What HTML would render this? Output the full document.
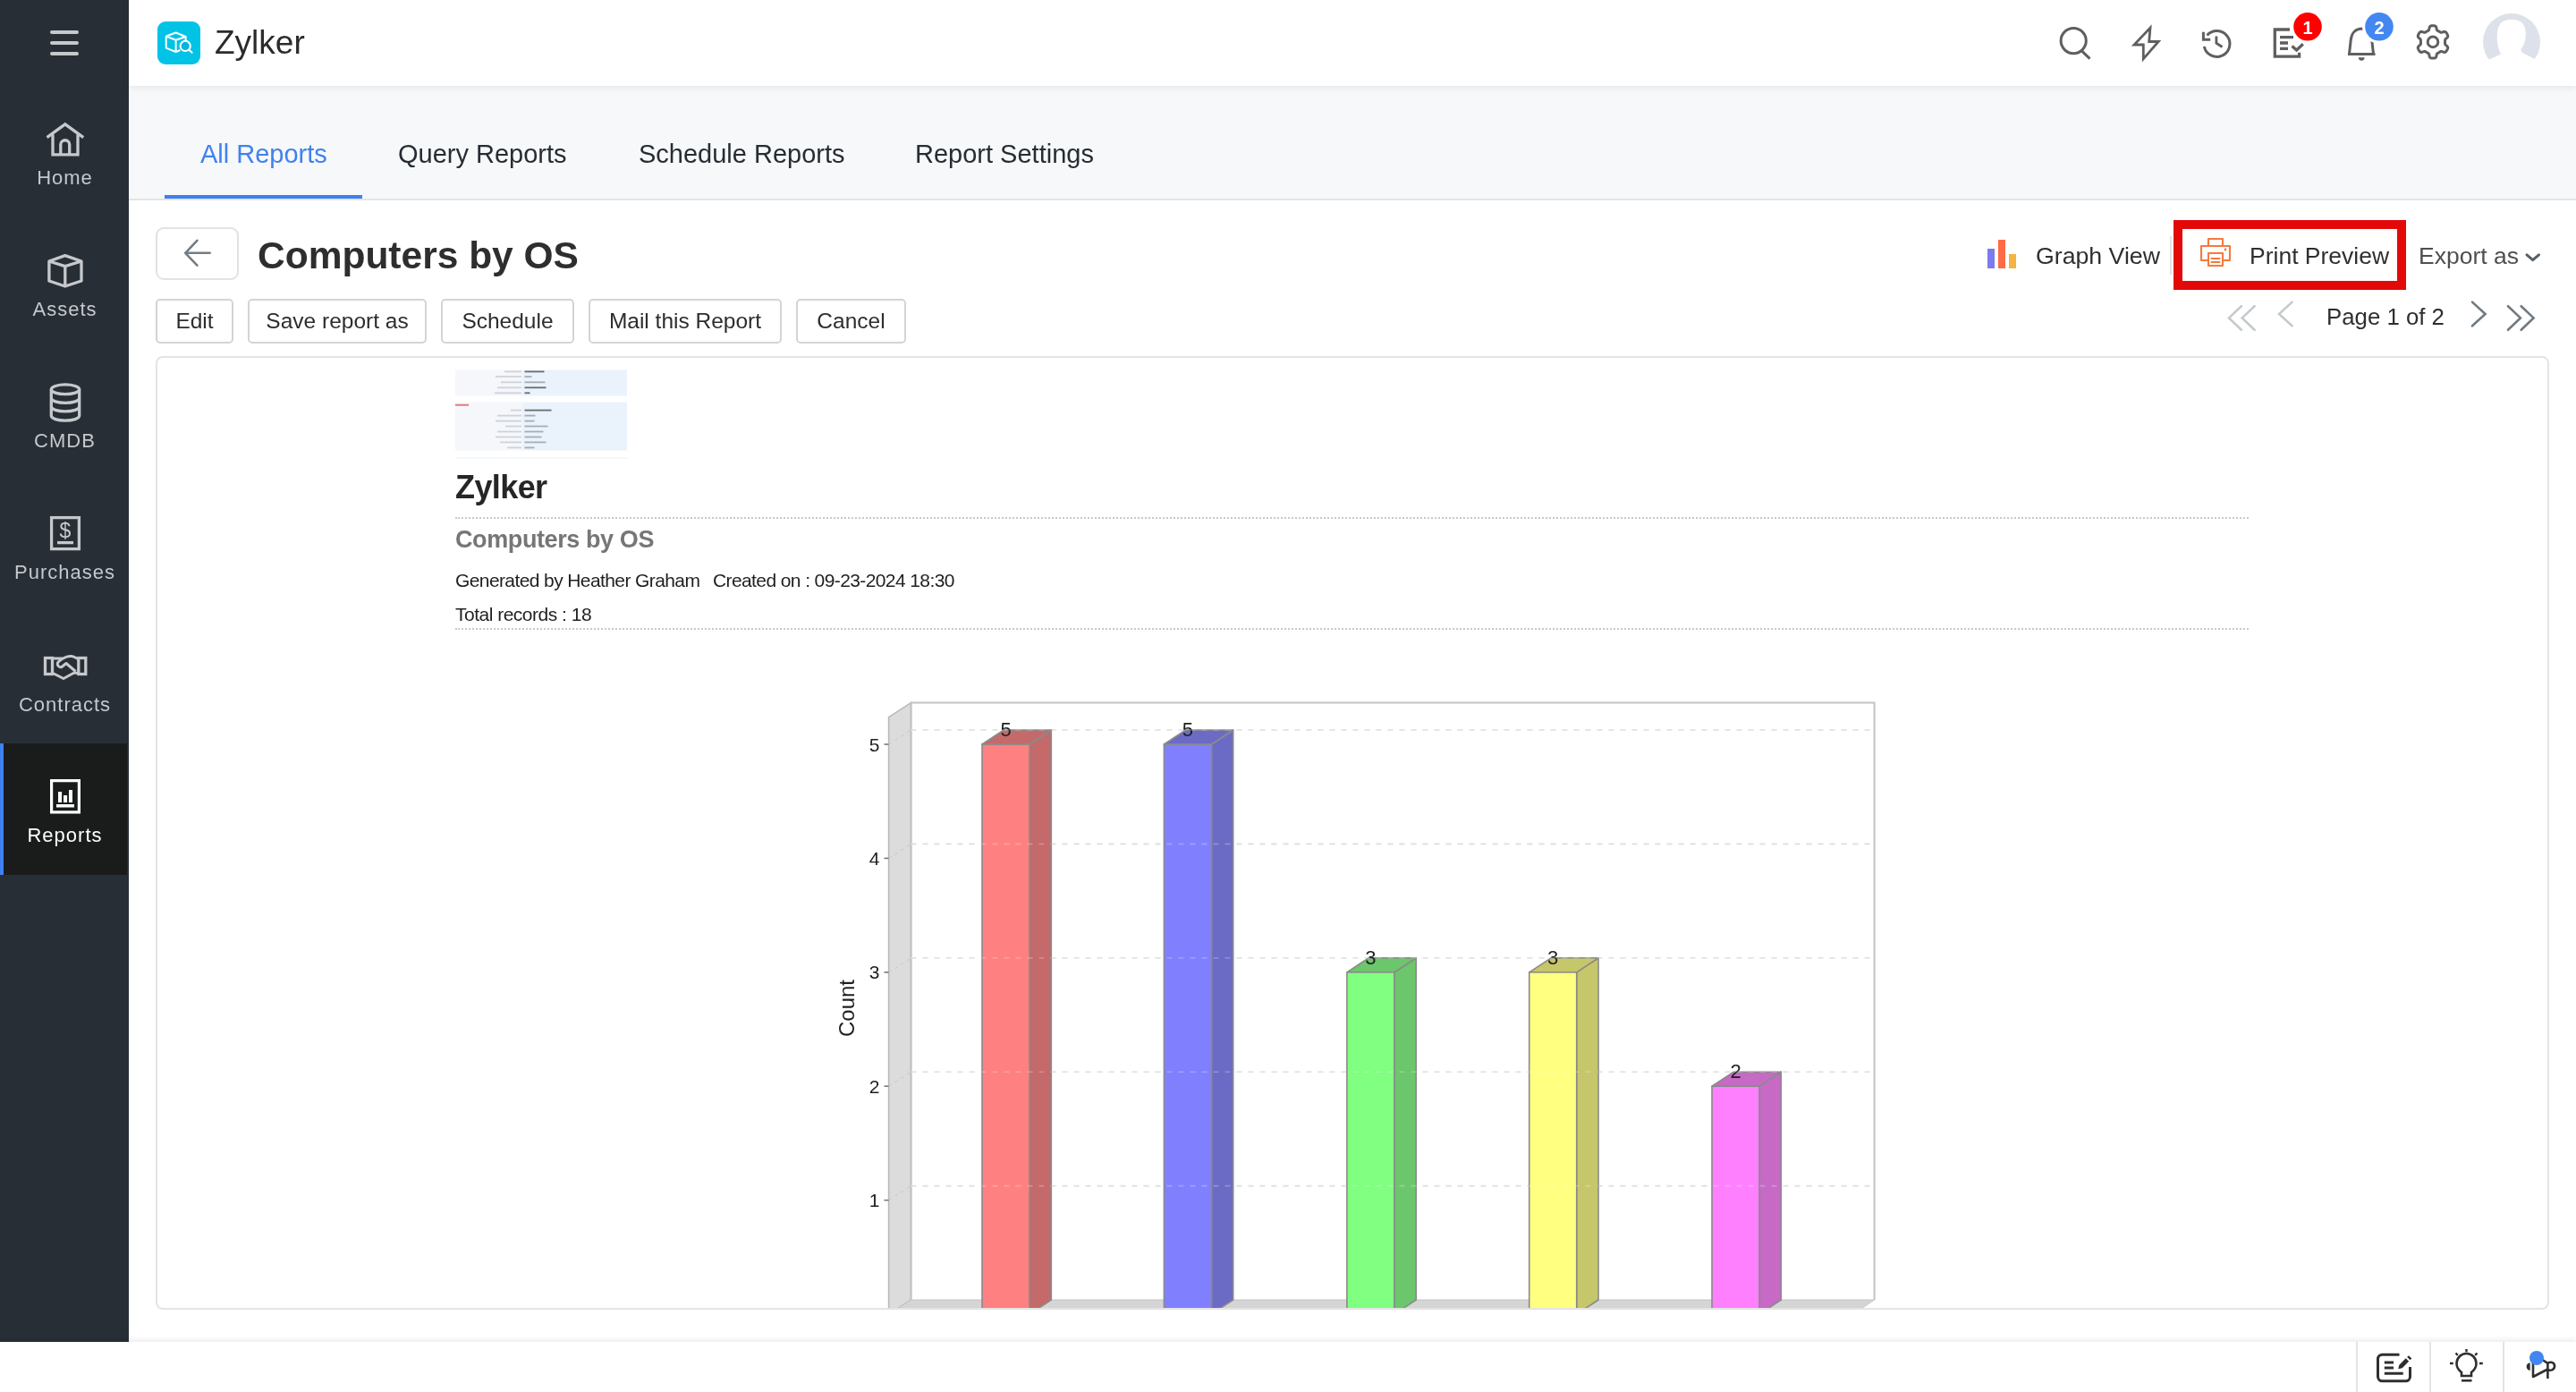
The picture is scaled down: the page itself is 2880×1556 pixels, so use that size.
<!DOCTYPE html>
<html><head><meta charset="utf-8">
<style>
*{margin:0;padding:0;box-sizing:border-box}
html,body{width:2880px;height:1556px;overflow:hidden;background:#fff;font-family:"Liberation Sans",sans-serif;color:#333}
#wrap{position:absolute;left:0;top:0;width:2880px;height:1556px;will-change:transform}
.a{position:absolute;white-space:nowrap}
#side{position:absolute;left:0;top:0;width:144px;height:1500px;background:#272e36}
.ham{position:absolute;left:56px;width:32px;height:4px;border-radius:2px;background:#c7c8ca}
.nlab{position:absolute;left:0;width:144px;text-align:center;font-size:22px;line-height:22px;color:#c5c8cc;letter-spacing:1px;text-indent:1px}
#hdr{position:absolute;left:144px;top:0;width:2736px;height:96px;background:#fff;box-shadow:0 2px 8px rgba(0,0,0,0.08);z-index:2}
#tabs{position:absolute;left:144px;top:96px;width:2736px;height:128px;background:#f7f8fa;border-bottom:2px solid #e3e4e6}
.tab{position:absolute;font-size:29px;line-height:29px;color:#262d33}
.btn{position:absolute;top:334px;height:50px;border:2px solid #d4d4d4;border-radius:5px;background:#fff;font-size:24.5px;line-height:46px;text-align:center;color:#2d2d2d}
#box{position:absolute;left:174px;top:398px;width:2676px;height:1066px;border:2px solid #e4e4e4;border-radius:8px;background:#fff}
#foot{position:absolute;left:0;top:1500px;width:2880px;height:56px;background:#fff;box-shadow:0 -3px 6px rgba(0,0,0,0.07);z-index:3}
#ov{position:absolute;left:0;top:0;z-index:5}
.rp{position:absolute;white-space:nowrap;color:#1f1f1f}
.dot{position:absolute;left:509px;width:2005px;height:0;border-top:2px dotted #c9c9c9}
</style></head><body><div id="wrap">
<div id="side">
  <div class="ham" style="top:34px"></div>
  <div class="ham" style="top:46px"></div>
  <div class="ham" style="top:58px"></div>
  <div style="position:absolute;left:0;top:831px;width:142px;height:147px;background:#1a1c1c;border-left:4px solid #3e82f0"></div>
  <div class="nlab" style="top:188px">Home</div>
  <div class="nlab" style="top:335px">Assets</div>
  <div class="nlab" style="top:482px">CMDB</div>
  <div class="nlab" style="top:629px">Purchases</div>
  <div class="nlab" style="top:777px">Contracts</div>
  <div class="nlab" style="top:923px;color:#fff">Reports</div>
</div>
<div id="hdr">
  <div class="a" style="left:96px;top:29px;font-size:37px;line-height:37px;color:#2b2b2b">Zylker</div>
</div>
<div id="tabs">
  <div class="tab" style="left:80px;top:62px;color:#3f82ee">All Reports</div>
  <div style="position:absolute;left:40px;top:122px;width:221px;height:4px;background:#3f82ee"></div>
  <div class="tab" style="left:301px;top:62px">Query Reports</div>
  <div class="tab" style="left:570px;top:62px">Schedule Reports</div>
  <div class="tab" style="left:879px;top:62px">Report Settings</div>
</div>
<div class="a" style="left:174px;top:254px;width:93px;height:59px;border:2px solid #e2e2e2;border-radius:9px"></div>
<div class="a" style="left:288px;top:265px;font-size:42.5px;line-height:42px;font-weight:bold;color:#2e2e2e">Computers by OS</div>
<div class="a" style="left:2276px;top:273px;font-size:26.7px;line-height:27px;color:#2f2f2f">Graph View</div>
<div class="a" style="left:2426px;top:264px;width:2px;height:43px;background:#e3e3e3"></div>
<div class="a" style="left:2430px;top:246px;width:260px;height:78px;border:10px solid #e30909"></div>
<div class="a" style="left:2515px;top:273px;font-size:26.5px;line-height:27px;color:#2f2f2f">Print Preview</div>
<div class="a" style="left:2704px;top:273px;font-size:26.5px;line-height:27px;color:#4f4f4f">Export as</div>
<div class="a" style="left:2601px;top:341px;font-size:25.8px;line-height:26px;color:#2f2f2f">Page 1 of 2</div>
<div class="btn" style="left:174px;width:87px">Edit</div>
<div class="btn" style="left:277px;width:200px">Save report as</div>
<div class="btn" style="left:493px;width:149px">Schedule</div>
<div class="btn" style="left:658px;width:216px">Mail this Report</div>
<div class="btn" style="left:890px;width:123px">Cancel</div>
<div id="box"></div>
<!--REPORT-->
<svg class="a" style="left:509px;top:412px;filter:blur(0.45px)" width="194" height="102" viewBox="509 412 194 102"><rect x="509" y="413.5" width="75" height="29" fill="#f5f7fb"/><rect x="584" y="413.5" width="117" height="29" fill="#eaf3fb"/><rect x="509" y="449.5" width="75" height="54" fill="#f5f7fb"/><rect x="584" y="449.5" width="117" height="54" fill="#eaf3fb"/><rect x="509" y="511.5" width="192" height="1" fill="#eef4fa"/><rect x="509" y="451.8" width="15" height="1.8" fill="#d9534f" opacity="0.8"/><rect x="564" y="414.5" width="19" height="1.8" fill="#80868d" opacity="0.32"/><rect x="586.5" y="414.5" width="22" height="1.8" fill="#333" opacity="0.7"/><rect x="554" y="420.1" width="29" height="1.8" fill="#80868d" opacity="0.32"/><rect x="586.5" y="420.1" width="8" height="1.8" fill="#8a8f96" opacity="0.7"/><rect x="560" y="426.40000000000003" width="23" height="1.8" fill="#80868d" opacity="0.32"/><rect x="586.5" y="426.40000000000003" width="23" height="1.8" fill="#8a8f96" opacity="0.7"/><rect x="556" y="432.40000000000003" width="27" height="1.8" fill="#80868d" opacity="0.32"/><rect x="586.5" y="432.40000000000003" width="24" height="1.8" fill="#333" opacity="0.7"/><rect x="553" y="438.40000000000003" width="30" height="1.8" fill="#80868d" opacity="0.32"/><rect x="586.5" y="438.40000000000003" width="6" height="1.8" fill="#333" opacity="0.7"/><rect x="571" y="457.70000000000005" width="12" height="1.8" fill="#80868d" opacity="0.32"/><rect x="586.5" y="457.70000000000005" width="30" height="1.8" fill="#333" opacity="0.7"/><rect x="556" y="463.70000000000005" width="27" height="1.8" fill="#80868d" opacity="0.32"/><rect x="586.5" y="463.70000000000005" width="12" height="1.8" fill="#8a8f96" opacity="0.7"/><rect x="554" y="469.70000000000005" width="29" height="1.8" fill="#80868d" opacity="0.32"/><rect x="586.5" y="469.70000000000005" width="11" height="1.8" fill="#8a8f96" opacity="0.7"/><rect x="565" y="475.6" width="18" height="1.8" fill="#80868d" opacity="0.32"/><rect x="586.5" y="475.6" width="26" height="1.8" fill="#8a8f96" opacity="0.7"/><rect x="556" y="481.6" width="27" height="1.8" fill="#80868d" opacity="0.32"/><rect x="586.5" y="481.6" width="21" height="1.8" fill="#8a8f96" opacity="0.7"/><rect x="554" y="487.6" width="29" height="1.8" fill="#80868d" opacity="0.32"/><rect x="586.5" y="487.6" width="19" height="1.8" fill="#8a8f96" opacity="0.7"/><rect x="559" y="493.5" width="24" height="1.8" fill="#80868d" opacity="0.32"/><rect x="586.5" y="493.5" width="24" height="1.8" fill="#8a8f96" opacity="0.7"/><rect x="567" y="499.5" width="16" height="1.8" fill="#80868d" opacity="0.32"/><rect x="586.5" y="499.5" width="11" height="1.8" fill="#8a8f96" opacity="0.7"/></svg>
<div class="rp" style="left:509px;top:527px;font-size:36px;line-height:36px;font-weight:bold;color:#262626;letter-spacing:-0.6px">Zylker</div>
<div class="dot" style="top:578px"></div>
<div class="rp" style="left:509px;top:590px;font-size:27px;line-height:27px;font-weight:bold;color:#767676;letter-spacing:-0.4px">Computers by OS</div>
<div class="rp" style="left:509px;top:638px;font-size:21px;line-height:21px;letter-spacing:-0.6px">Generated by Heather Graham</div>
<div class="rp" style="left:797px;top:638px;font-size:21px;line-height:21px;letter-spacing:-0.6px">Created on : 09-23-2024 18:30</div>
<div class="rp" style="left:509px;top:676px;font-size:21px;line-height:21px;letter-spacing:-0.5px">Total records : 18</div>
<div class="dot" style="top:702px"></div>
<div id="foot"></div>
<!--OVERLAY--><svg id="ov" width="2880" height="1556" viewBox="0 0 2880 1556">
<g fill="none" stroke="#c6c8cb" stroke-width="3.3">
 <path d="M52.5,153.7 L72.8,138.8 L93.2,153.7 M59,150.4 V172.8 H87 V150.4 M67.8,172.8 V161.7 A4.95,4.95 0 0 1 77.7,161.7 V172.8"/>
 <path d="M72.8,285.6 L91,292 V314 L72.8,320 L54.9,314 V292 Z M54.9,292 L72.8,297.6 L91,292 M72.8,297.6 V320" stroke-linejoin="round"/>
 <ellipse cx="73" cy="435.3" rx="15.7" ry="5.4"/>
 <path d="M57.3,435.3 V464.8 M88.7,435.3 V464.8 M57.3,445 A15.7,5.4 0 0 0 88.7,445 M57.3,454.5 A15.7,5.4 0 0 0 88.7,454.5 M57.3,464.8 A15.7,5.4 0 0 0 88.7,464.8"/>
 <rect x="57.6" y="578.6" width="30.8" height="35"/>
 <path d="M64,606.6 H82"/>
 <rect x="50.5" y="735.5" width="8" height="18"/>
 <rect x="87.8" y="735.5" width="8" height="18"/>
 <path d="M59,736 H70.5 C74,733.8 77,733.2 80,733.5 C82.5,733.8 84.5,735 87,736.5 M70.5,736 C68,737.5 65.5,739 64.5,741 C63.5,744 66.5,746.5 69,745.5 L74,741.5 L84.5,750.5 M59,752.5 L71,758.5 L83,752 L87.5,752.5" stroke-width="3" stroke-linejoin="round"/>
</g>
<text x="73" y="601" font-size="23" font-family="Liberation Sans" fill="#c6c8cb" text-anchor="middle">$</text>
<g fill="#fff">
 <path d="M56,871 H90 V909.4 H56 Z M59.2,874.2 V906.2 H86.8 V874.2 Z" fill-rule="evenodd"/>
 <rect x="65" y="885" width="4.1" height="12"/>
 <rect x="71" y="889" width="4.1" height="8"/>
 <rect x="77" y="883" width="4" height="14"/>
 <rect x="63" y="899" width="20" height="3.5"/>
</g>
<!-- logo -->
<rect x="176" y="24" width="48" height="48" rx="9" fill="#00c3e5"/>
<g fill="none" stroke="#fff" stroke-width="2" stroke-linejoin="round">
 <path d="M185.7,40.5 L196.6,36.5 L207.6,41 V46.5 M185.7,40.5 L196.6,44.7 L207.6,41 M185.7,40.5 V53.6 L196.6,58 L201.5,56 M196.6,44.7 V58"/>
 <circle cx="207.2" cy="51.4" r="5.6" fill="#0cb2de"/>
 <path d="M211.3,55.6 L214.6,58.8" stroke-linecap="round"/>
</g>
<!-- header icons -->
<g fill="none" stroke="#5f5f5f" stroke-width="3">
 <circle cx="2318.2" cy="45.6" r="14.1"/>
 <path d="M2327.6,57.1 L2336.5,65.6"/>
 <path d="M2404,31 L2402.7,46.5 H2413.2 L2396.3,65.8 V50 H2386 Z" stroke-width="2.8"/>
 <path d="M2464.3,52 A14.5,14.5 0 1 0 2467.5,39.5"/>
 <path d="M2463.4,35.8 V44.3 H2471.2"/>
 <path d="M2477.9,40.5 V48.2 L2484.5,52.5" stroke-width="2.8"/>
 <path d="M2560,33 H2543.3 V63.2 H2570.6 V58.7 M2549,41.6 H2564 M2549,48 H2558 M2549,54.4 H2558 M2562.5,51.4 L2567.6,56 L2574.8,49.3" stroke-width="3.3"/>
 <path d="M2625,60.4 H2655.5 M2626.5,60.4 L2628.2,45 C2628.8,37.5 2633,32.5 2640,32 C2647,32.5 2651.2,37.5 2651.8,45 L2653.5,60.4"/>
 <path d="M2636.8,64.3 A3.4,3.4 0 0 0 2643.6,64.3 Z" fill="#5f5f5f" stroke="none"/>
 <path transform="translate(2720,46.9)" stroke-linejoin="round" d="M0.00,-18.20 L0.53,-18.19 L1.06,-18.16 L1.58,-18.09 L2.10,-17.99 L2.61,-17.82 L3.09,-17.52 L3.51,-17.00 L3.83,-16.16 L4.04,-15.09 L4.22,-14.11 L4.45,-13.43 L4.74,-13.02 L5.06,-12.75 L5.41,-12.54 L5.76,-12.35 L6.11,-12.16 L6.46,-11.97 L6.80,-11.78 L7.14,-11.58 L7.48,-11.37 L7.81,-11.16 L8.15,-10.95 L8.51,-10.76 L8.91,-10.61 L9.41,-10.57 L10.10,-10.71 L11.04,-11.04 L12.08,-11.40 L12.97,-11.54 L13.63,-11.44 L14.13,-11.17 L14.53,-10.82 L14.88,-10.42 L15.19,-9.99 L15.49,-9.55 L15.76,-9.10 L16.02,-8.64 L16.25,-8.16 L16.46,-7.68 L16.63,-7.17 L16.74,-6.65 L16.72,-6.09 L16.48,-5.46 L15.91,-4.76 L15.09,-4.04 L14.33,-3.40 L13.86,-2.86 L13.65,-2.41 L13.57,-1.99 L13.56,-1.59 L13.57,-1.19 L13.59,-0.79 L13.60,-0.40 L13.60,0.00 L13.60,0.40 L13.59,0.79 L13.57,1.19 L13.56,1.59 L13.57,1.99 L13.65,2.41 L13.86,2.86 L14.33,3.40 L15.09,4.04 L15.91,4.76 L16.48,5.46 L16.72,6.09 L16.74,6.65 L16.63,7.17 L16.46,7.68 L16.25,8.16 L16.02,8.64 L15.76,9.10 L15.49,9.55 L15.19,9.99 L14.88,10.42 L14.53,10.82 L14.13,11.17 L13.63,11.44 L12.97,11.54 L12.08,11.40 L11.04,11.04 L10.10,10.71 L9.41,10.57 L8.91,10.61 L8.51,10.76 L8.15,10.95 L7.81,11.16 L7.48,11.37 L7.14,11.58 L6.80,11.78 L6.46,11.97 L6.11,12.16 L5.76,12.35 L5.41,12.54 L5.06,12.75 L4.74,13.02 L4.45,13.43 L4.22,14.11 L4.04,15.09 L3.83,16.16 L3.51,17.00 L3.09,17.52 L2.61,17.82 L2.10,17.99 L1.58,18.09 L1.06,18.16 L0.53,18.19 L0.00,18.20 L-0.53,18.19 L-1.06,18.16 L-1.58,18.09 L-2.10,17.99 L-2.61,17.82 L-3.09,17.52 L-3.51,17.00 L-3.83,16.16 L-4.04,15.09 L-4.22,14.11 L-4.45,13.43 L-4.74,13.02 L-5.06,12.75 L-5.41,12.54 L-5.76,12.35 L-6.11,12.16 L-6.46,11.97 L-6.80,11.78 L-7.14,11.58 L-7.48,11.37 L-7.81,11.16 L-8.15,10.95 L-8.51,10.76 L-8.91,10.61 L-9.41,10.57 L-10.10,10.71 L-11.04,11.04 L-12.08,11.40 L-12.97,11.54 L-13.63,11.44 L-14.13,11.17 L-14.53,10.82 L-14.88,10.42 L-15.19,9.99 L-15.49,9.55 L-15.76,9.10 L-16.02,8.64 L-16.25,8.16 L-16.46,7.68 L-16.63,7.17 L-16.74,6.65 L-16.72,6.09 L-16.48,5.46 L-15.91,4.76 L-15.09,4.04 L-14.33,3.40 L-13.86,2.86 L-13.65,2.41 L-13.57,1.99 L-13.56,1.59 L-13.57,1.19 L-13.59,0.79 L-13.60,0.40 L-13.60,0.00 L-13.60,-0.40 L-13.59,-0.79 L-13.57,-1.19 L-13.56,-1.59 L-13.57,-1.99 L-13.65,-2.41 L-13.86,-2.86 L-14.33,-3.40 L-15.09,-4.04 L-15.91,-4.76 L-16.48,-5.46 L-16.72,-6.09 L-16.74,-6.65 L-16.63,-7.17 L-16.46,-7.68 L-16.25,-8.16 L-16.02,-8.64 L-15.76,-9.10 L-15.49,-9.55 L-15.19,-9.99 L-14.88,-10.42 L-14.53,-10.82 L-14.13,-11.17 L-13.63,-11.44 L-12.97,-11.54 L-12.08,-11.40 L-11.04,-11.04 L-10.10,-10.71 L-9.41,-10.57 L-8.91,-10.61 L-8.51,-10.76 L-8.15,-10.95 L-7.81,-11.16 L-7.48,-11.37 L-7.14,-11.58 L-6.80,-11.78 L-6.46,-11.97 L-6.11,-12.16 L-5.76,-12.35 L-5.41,-12.54 L-5.06,-12.75 L-4.74,-13.02 L-4.45,-13.43 L-4.22,-14.11 L-4.04,-15.09 L-3.83,-16.16 L-3.51,-17.00 L-3.09,-17.52 L-2.61,-17.82 L-2.10,-17.99 L-1.58,-18.09 L-1.06,-18.16 L-0.53,-18.19Z"/>
 <circle cx="2720" cy="46.9" r="5.8"/>
</g>
<circle cx="2580" cy="29.8" r="19" fill="#fff"/>
<circle cx="2580" cy="29.8" r="15.8" fill="#ff0000"/>
<text x="2580" y="37.6" font-size="20" font-weight="bold" font-family="Liberation Sans" fill="#fff" text-anchor="middle">1</text>
<circle cx="2660" cy="29.8" r="19" fill="#fff"/>
<circle cx="2660" cy="29.8" r="15.8" fill="#4387f1"/>
<text x="2660" y="37.6" font-size="20" font-weight="bold" font-family="Liberation Sans" fill="#fff" text-anchor="middle">2</text>
<clipPath id="avc"><rect x="2770" y="10" width="80" height="57"/></clipPath>
<circle cx="2808" cy="47" r="32" fill="#dde1ea" clip-path="url(#avc)"/>
<path d="M2796,60 C2791,52 2790,35 2795,27 C2800,20 2816,20 2821,27 C2826,35 2824,50 2818,55 L2820,59 L2836,67 H2782 L2797,60 Z" fill="#fff"/>
<!-- title row icons -->
<path d="M220.4,268.8 L207.2,282.8 L220.4,296.7 M207.2,282.8 H234.7" fill="none" stroke="#737c84" stroke-width="2.6" stroke-linecap="round" stroke-linejoin="round"/>
<rect x="2222" y="278" width="8" height="22" fill="#7b7bef"/>
<rect x="2234" y="268" width="8" height="32" fill="#fe6b45"/>
<rect x="2246" y="284" width="8" height="16" fill="#f3b443"/>
<g fill="none" stroke="#f27b3f" stroke-width="2.1" stroke-linejoin="round">
 <path d="M2469,275 V267 H2485 V275"/>
 <path d="M2469,291 H2461 V275 H2493 V291 H2485"/>
 <rect x="2469" y="283" width="16" height="14"/>
 <path d="M2472.5,289 H2481.5 M2472.5,293 H2481.5" stroke-linecap="round"/>
</g>
<circle cx="2488" cy="279" r="1.4" fill="#f27b3f"/>
<path d="M2825,284.8 L2831.7,290.6 L2838.5,284.8" fill="none" stroke="#555f66" stroke-width="3" stroke-linecap="round"/>
<g fill="none" stroke="#c5cacd" stroke-width="2.6" stroke-linecap="round">
 <path d="M2505.9,342.2 L2492,355.4 L2505.9,368.8 M2520.6,342.2 L2506.7,355.4 L2520.6,368.8"/>
 <path d="M2562.6,337.6 L2548,351 L2562.6,364.3"/>
</g>
<g fill="none" stroke="#6f7a81" stroke-width="2.6" stroke-linecap="round">
 <path d="M2764,337.6 L2778.6,351 L2764,364.3"/>
 <path d="M2804,342.2 L2817.9,355.4 L2804,368.8 M2818.7,342.2 L2832.6,355.4 L2818.7,368.8"/>
</g>
<!-- footer -->
<g fill="#e4e4e4"><rect x="2634" y="1500" width="2" height="56"/><rect x="2716" y="1500" width="2" height="56"/><rect x="2798" y="1500" width="2" height="56"/></g>
<g fill="none" stroke="#2f2f2f" stroke-width="3" stroke-linecap="butt">
 <path d="M2682.5,1514.2 H2663.5 A5,5 0 0 0 2658.5,1519.2 V1538.8 A5,5 0 0 0 2663.5,1543.8 H2689.5 A5,5 0 0 0 2694.5,1538.8 V1528"/>
 <path d="M2665.8,1522.9 H2676 M2665.8,1529 H2676 M2665.8,1535.3 H2686.7"/>
 <path d="M2681.20,1530.30 L2682.33,1525.77 L2689.76,1518.35 L2693.15,1521.74 L2685.73,1529.17Z M2691.17,1516.94 L2692.94,1515.17 L2696.33,1518.56 L2694.56,1520.33Z" fill="#2f2f2f" stroke="none"/>
 <path d="M2752,1538 V1534 C2748,1531 2746.5,1527.5 2746.5,1524 A11,11 0 0 1 2768.5,1524 C2768.5,1527.5 2767,1531 2763,1534 V1538 Z" stroke-width="2.6"/>
 <path d="M2752,1543.2 H2763.5 M2757.5,1508 V1511.3 M2745.5,1512.5 L2747.8,1514.8 M2769.5,1512.5 L2767.2,1514.8 M2739,1524 H2742.8 M2772,1524 H2775.8" stroke-width="2.4"/>
 <path d="M2832,1523.5 V1539 L2848.4,1530.5 M2832,1523.5 L2840,1518.5 L2848.4,1523.8 M2848.4,1541 V1523.6 C2853.5,1521.2 2856.5,1524.5 2856,1527.8 C2855.5,1531.5 2851.5,1532.5 2848.4,1531.2" stroke-width="2.6" stroke-linejoin="round"/>
</g>
<path d="M2828.7,1523.2 C2823.3,1523.6 2823.3,1531.6 2828.7,1532 Z" fill="#2f2f2f"/>
<circle cx="2836" cy="1518" r="8" fill="#4386f0"/>
<!--CHART-->
<clipPath id="chc"><rect x="176" y="400" width="2672" height="1062"/></clipPath>
<g clip-path="url(#chc)">
<path d="M993.6,801.6 L1018.5,785.6 V1453 L993.6,1469 Z" fill="#dcdcdc" stroke="#b9b9b9" stroke-width="1.6"/>
<path d="M993.6,1469 L1018.5,1453 H2095.6 L2071.2999999999997,1469 Z" fill="#d5d5d5" stroke="#c4c4c4" stroke-width="1"/>
<path d="M1018.5,1453 V785.6 H2095.6 V1453" fill="none" stroke="#c3c3c3" stroke-width="2"/>
<path d="M1018.5,1325.6 H2094.6" stroke="#d6d6d6" stroke-width="1.6" stroke-dasharray="6,7"/>
<path d="M993.6,1341.6 L1018.5,1325.6" stroke="#cfcfcf" stroke-width="1.4" stroke-dasharray="4,4"/>
<path d="M988.5,1341.6 H993.6" stroke="#777" stroke-width="1.6"/>
<text x="983.5" y="1349.1" font-size="21" font-family="Liberation Sans" fill="#1e1e1e" text-anchor="end">1</text>
<path d="M1018.5,1198.2 H2094.6" stroke="#d6d6d6" stroke-width="1.6" stroke-dasharray="6,7"/>
<path d="M993.6,1214.2 L1018.5,1198.2" stroke="#cfcfcf" stroke-width="1.4" stroke-dasharray="4,4"/>
<path d="M988.5,1214.2 H993.6" stroke="#777" stroke-width="1.6"/>
<text x="983.5" y="1221.7" font-size="21" font-family="Liberation Sans" fill="#1e1e1e" text-anchor="end">2</text>
<path d="M1018.5,1070.8 H2094.6" stroke="#d6d6d6" stroke-width="1.6" stroke-dasharray="6,7"/>
<path d="M993.6,1086.8 L1018.5,1070.8" stroke="#cfcfcf" stroke-width="1.4" stroke-dasharray="4,4"/>
<path d="M988.5,1086.8 H993.6" stroke="#777" stroke-width="1.6"/>
<text x="983.5" y="1094.3" font-size="21" font-family="Liberation Sans" fill="#1e1e1e" text-anchor="end">3</text>
<path d="M1018.5,943.4 H2094.6" stroke="#d6d6d6" stroke-width="1.6" stroke-dasharray="6,7"/>
<path d="M993.6,959.4 L1018.5,943.4" stroke="#cfcfcf" stroke-width="1.4" stroke-dasharray="4,4"/>
<path d="M988.5,959.4 H993.6" stroke="#777" stroke-width="1.6"/>
<text x="983.5" y="966.9" font-size="21" font-family="Liberation Sans" fill="#1e1e1e" text-anchor="end">4</text>
<path d="M1018.5,816.0 H2094.6" stroke="#d6d6d6" stroke-width="1.6" stroke-dasharray="6,7"/>
<path d="M993.6,832.0 L1018.5,816.0" stroke="#cfcfcf" stroke-width="1.4" stroke-dasharray="4,4"/>
<path d="M988.5,832.0 H993.6" stroke="#777" stroke-width="1.6"/>
<text x="983.5" y="839.5" font-size="21" font-family="Liberation Sans" fill="#1e1e1e" text-anchor="end">5</text>
<path d="M1151,832.0 L1175.3,816.0 V1453 L1151,1469 Z" fill="#c46a6a" stroke="#8a8a8a" stroke-width="1.6" stroke-linejoin="round"/>
<path d="M1098,832.0 L1122.3,816.0 H1175.3 L1151,832.0 Z" fill="#c46a6a" stroke="#8a8a8a" stroke-width="1.6" stroke-linejoin="round"/>
<rect x="1098" y="832.0" width="53" height="637.0" fill="#ff8080" stroke="#8a8a8a" stroke-width="1.6"/>
<text x="1124.5" y="823.0" font-size="22" font-family="Liberation Sans" fill="#1e1e1e" text-anchor="middle">5</text>
<path d="M1354.4,832.0 L1378.7,816.0 V1453 L1354.4,1469 Z" fill="#6b6bc6" stroke="#8a8a8a" stroke-width="1.6" stroke-linejoin="round"/>
<path d="M1301.4,832.0 L1325.7,816.0 H1378.7 L1354.4,832.0 Z" fill="#6b6bc6" stroke="#8a8a8a" stroke-width="1.6" stroke-linejoin="round"/>
<rect x="1301.4" y="832.0" width="53" height="637.0" fill="#8080ff" stroke="#8a8a8a" stroke-width="1.6"/>
<text x="1327.9" y="823.0" font-size="22" font-family="Liberation Sans" fill="#1e1e1e" text-anchor="middle">5</text>
<path d="M1558.9,1086.8 L1583.2,1070.8 V1453 L1558.9,1469 Z" fill="#6cc66c" stroke="#8a8a8a" stroke-width="1.6" stroke-linejoin="round"/>
<path d="M1505.9,1086.8 L1530.2,1070.8 H1583.2 L1558.9,1086.8 Z" fill="#6cc66c" stroke="#8a8a8a" stroke-width="1.6" stroke-linejoin="round"/>
<rect x="1505.9" y="1086.8" width="53" height="382.20000000000005" fill="#80ff80" stroke="#8a8a8a" stroke-width="1.6"/>
<text x="1532.4" y="1077.8" font-size="22" font-family="Liberation Sans" fill="#1e1e1e" text-anchor="middle">3</text>
<path d="M1762.7,1086.8 L1787.0,1070.8 V1453 L1762.7,1469 Z" fill="#c6c66a" stroke="#8a8a8a" stroke-width="1.6" stroke-linejoin="round"/>
<path d="M1709.7,1086.8 L1734.0,1070.8 H1787.0 L1762.7,1086.8 Z" fill="#c6c66a" stroke="#8a8a8a" stroke-width="1.6" stroke-linejoin="round"/>
<rect x="1709.7" y="1086.8" width="53" height="382.20000000000005" fill="#ffff80" stroke="#8a8a8a" stroke-width="1.6"/>
<text x="1736.2" y="1077.8" font-size="22" font-family="Liberation Sans" fill="#1e1e1e" text-anchor="middle">3</text>
<path d="M1967,1214.2 L1991.3,1198.2 V1453 L1967,1469 Z" fill="#c66ac6" stroke="#8a8a8a" stroke-width="1.6" stroke-linejoin="round"/>
<path d="M1914,1214.2 L1938.3,1198.2 H1991.3 L1967,1214.2 Z" fill="#c66ac6" stroke="#8a8a8a" stroke-width="1.6" stroke-linejoin="round"/>
<rect x="1914" y="1214.2" width="53" height="254.79999999999995" fill="#ff80ff" stroke="#8a8a8a" stroke-width="1.6"/>
<text x="1940.5" y="1205.2" font-size="22" font-family="Liberation Sans" fill="#1e1e1e" text-anchor="middle">2</text>
<path d="M1018.5,1325.6 H2094.6" stroke="#ffffff" stroke-opacity="0.25" stroke-width="1.6" stroke-dasharray="6,7"/>
<path d="M1018.5,1198.2 H2094.6" stroke="#ffffff" stroke-opacity="0.25" stroke-width="1.6" stroke-dasharray="6,7"/>
<path d="M1018.5,1070.8 H2094.6" stroke="#ffffff" stroke-opacity="0.25" stroke-width="1.6" stroke-dasharray="6,7"/>
<path d="M1018.5,943.4 H2094.6" stroke="#ffffff" stroke-opacity="0.25" stroke-width="1.6" stroke-dasharray="6,7"/>
<path d="M1018.5,816.0 H2094.6" stroke="#ffffff" stroke-opacity="0.25" stroke-width="1.6" stroke-dasharray="6,7"/>
</g>
<text transform="translate(955,1127) rotate(-90)" font-size="24" font-family="Liberation Sans" fill="#1e1e1e" text-anchor="middle">Count</text>
</svg>
</div></body></html>
